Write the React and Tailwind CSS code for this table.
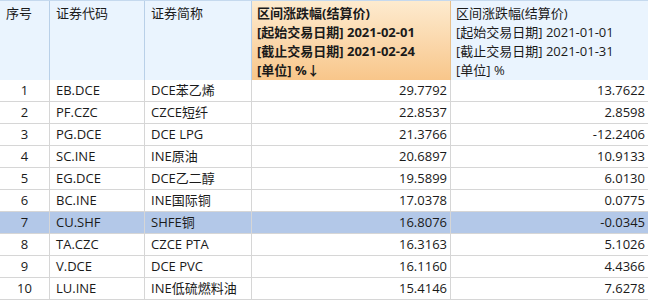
import React from "react";

const rows = [
  ["1", "EB.DCE", "DCE苯乙烯", "29.7792", "13.7622"],
  ["2", "PF.CZC", "CZCE短纤", "22.8537", "2.8598"],
  ["3", "PG.DCE", "DCE LPG", "21.3766", "-12.2406"],
  ["4", "SC.INE", "INE原油", "20.6897", "10.9133"],
  ["5", "EG.DCE", "DCE乙二醇", "19.5899", "6.0130"],
  ["6", "BC.INE", "INE国际铜", "17.0378", "0.0775"],
  ["7", "CU.SHF", "SHFE铜", "16.8076", "-0.0345"],
  ["8", "TA.CZC", "CZCE PTA", "16.3163", "5.1026"],
  ["9", "V.DCE", "DCE PVC", "16.1160", "4.4366"],
  ["10", "LU.INE", "INE低硫燃料油", "15.4146", "7.6278"],
];

const font = { fontFamily: '"Open Sans", "Noto Sans CJK SC", sans-serif' };

export default function App() {
  return (
    <div className="w-[648px] h-[301px] overflow-hidden bg-white text-[13px] text-[#1a1a1a]" style={font}>
      <div className="grid grid-cols-[50px_95px_107px_199px_197px] h-[80px] border-b border-[#b9d0e8] border-t border-t-[#c5d9ee] leading-[19px]">
        <div className="bg-[#eaf4fe] border-r border-[#b9d0e8] pl-[6px] pt-[3px]">序号</div>
        <div className="bg-[#eaf4fe] border-r border-[#b9d0e8] pl-[6px] pt-[3px]">证券代码</div>
        <div className="bg-[#eaf4fe] border-r border-[#b9d0e8] pl-[6px] pt-[3px]">证券简称</div>
        <div className="bg-gradient-to-b from-[#fdebcf] to-[#f8c68a] border-r border-[#e8c08c] pl-[5px] pt-[3px] font-bold">
          <div>区间涨跌幅(结算价)</div>
          <div>[起始交易日期] 2021-02-01</div>
          <div>[截止交易日期] 2021-02-24</div>
          <div>[单位] %↓</div>
        </div>
        <div className="bg-[#eaf4fe] pl-[5px] pt-[3px]">
          <div>区间涨跌幅(结算价)</div>
          <div>[起始交易日期] 2021-01-01</div>
          <div>[截止交易日期] 2021-01-31</div>
          <div>[单位] %</div>
        </div>
      </div>
      {rows.map((r) => {
        const sel = r[0] === "7";
        return (
          <div
            key={r[0]}
            className={`grid grid-cols-[50px_95px_107px_199px_197px] h-[22px] border-b border-[#d6d6d6] leading-[21px] ${sel ? "bg-[#b3c8e8]" : "bg-white"}`}
          >
            <div className="border-r border-[#d6d6d6] text-center">{r[0]}</div>
            <div className="border-r border-[#d6d6d6] pl-[6px]">{r[1]}</div>
            <div className="border-r border-[#d6d6d6] pl-[6px]">{r[2]}</div>
            <div className="border-r border-[#d6d6d6] text-right pr-[3px]">{r[3]}</div>
            <div className="text-right pr-[3px]">{r[4]}</div>
          </div>
        );
      })}
    </div>
  );
}
